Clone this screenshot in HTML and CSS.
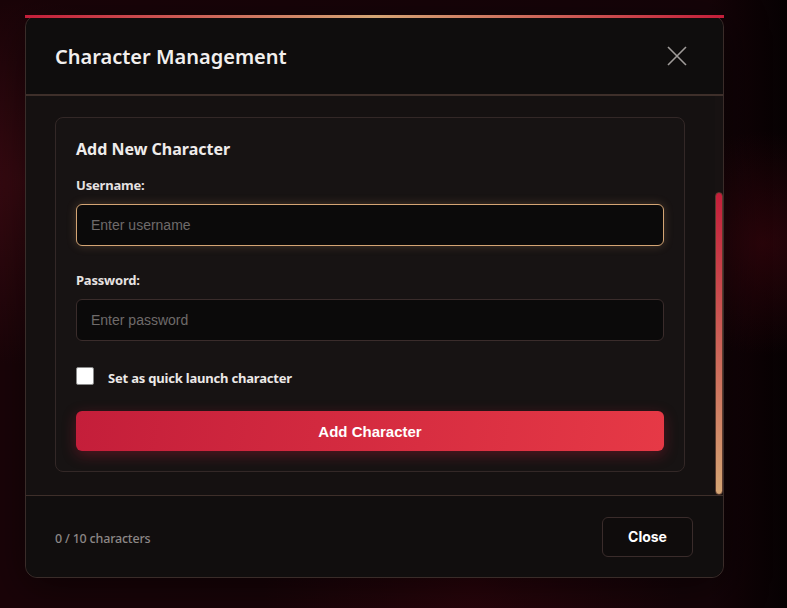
FILE: index.html
```
<!DOCTYPE html>
<html lang="en">
<head>
<meta charset="utf-8">
<title>Character Management</title>
<link rel="stylesheet" href="styles.css">
</head>
<body>
<div class="overlay">
  <div class="modal">
    <div class="modal-header">
      <h2 class="modal-title">Character Management</h2>
      <button class="icon-btn" aria-label="Close">
        <svg width="20" height="20" viewBox="0 0 20 20"><path d="M1 1 L19 19 M19 1 L1 19" stroke="#a09c9a" stroke-width="1.6" fill="none"/></svg>
      </button>
    </div>
    <div class="modal-body">
      <div class="scroll-view">
        <div class="card">
          <h3 class="card-title">Add New Character</h3>
          <div class="form-group">
            <label class="form-label" for="username">Username:</label>
            <input id="username" class="form-input is-focused" type="text" placeholder="Enter username" autofocus>
          </div>
          <div class="form-group">
            <label class="form-label" for="password">Password:</label>
            <input id="password" class="form-input" type="password" placeholder="Enter password">
          </div>
          <label class="check-row">
            <input class="check" type="checkbox">
            <span>Set as quick launch character</span>
          </label>
          <button class="primary-btn">Add Character</button>
        </div>
      </div>
      <div class="scrollbar"><div class="scroll-thumb"></div></div>
    </div>
    <div class="modal-footer">
      <span class="count">0 / 10 characters</span>
      <button class="secondary-btn">Close</button>
    </div>
  </div>
</div>
</body>
</html>
```
FILE: styles.css
```
* { box-sizing: border-box; }
html, body { margin: 0; padding: 0; height: 100%; }
body {
  background:
    radial-gradient(ellipse 300px 260px at 3% 30%, rgba(80, 14, 24, 0.55), transparent 70%),
    radial-gradient(ellipse 200px 160px at 97% 40%, rgba(60, 6, 14, 0.6), transparent 70%),
    radial-gradient(ellipse 300px 300px at 60% 95%, rgba(60, 5, 14, 0.5), transparent 70%),
    linear-gradient(90deg, #1a0408 0%, #150408 90%, #060102 100%);
  font-family: "Noto Sans", sans-serif;
  overflow: hidden;
}
.overlay {
  display: flex;
  padding: 15px 0 0 25px;
}
.modal {
  position: relative;
  width: 699px;
  height: 563px;
  display: flex;
  flex-direction: column;
  background: #120f0f;
  border: 1px solid #3a2c29;
  border-radius: 12px;
  box-shadow: 0 10px 40px rgba(0, 0, 0, 0.5);
}
.modal::before {
  content: "";
  position: absolute;
  top: -1px; left: -1px; right: -1px;
  height: 3px;
  background: linear-gradient(90deg, #c41e3a 0%, #d4a574 50%, #c41e3a 100%);
}
.modal-header {
  height: 80px;
  flex: none;
  display: flex;
  align-items: center;
  justify-content: space-between;
  padding: 2px 29px 0 29px;
  border-bottom: 2px solid #3e2f2a;
  background: #0f0d0d;
  border-radius: 12px 12px 0 0;
}
.modal-title {
  margin: 0;
  font-size: 20px;
  font-weight: 600;
  color: #f2efee;
}
.icon-btn {
  width: 32px; height: 32px;
  display: flex; align-items: center; justify-content: center;
  background: none; border: 0; padding: 0;
  margin-right: 1px;
}
.modal-body {
  flex: 1;
  min-height: 0;
  display: flex;
  background: #151111;
}
.scroll-view {
  flex: 1;
  min-width: 0;
  overflow: hidden;
  padding: 21px 30px 0 29px;
}
.scrollbar {
  width: 8px;
  flex: none;
  display: flex;
  flex-direction: column;
  justify-content: flex-end;
  background: #171212;
}
.scroll-thumb {
  height: 303px;
  border-radius: 4px;
  border: 1px solid #5a3a2e;
  background: linear-gradient(180deg, #c41e3a 0%, #d4a574 100%);
}
.card {
  background: #171313;
  border: 1px solid #332827;
  border-radius: 8px;
  padding: 20px;
}
.card-title {
  margin: 0 0 16px;
  font-size: 16px;
  line-height: 22px;
  font-weight: 700;
  color: #efeceb;
}
.form-group { margin-bottom: 25px; display: flex; flex-direction: column; }
.form-label {
  font-size: 13px;
  line-height: 18px;
  font-weight: 700;
  color: #e6e2e1;
  margin-bottom: 10px;
  letter-spacing: -0.2px;
}
.form-input {
  height: 42px;
  width: 100%;
  background: #0b0a0a;
  border: 1px solid #3a2c2b;
  border-radius: 6px;
  padding: 0 14px;
  font-family: "Liberation Sans", Arial, sans-serif;
  font-size: 14px;
  color: #eee;
  outline: none;
}
.form-input::placeholder { color: #6f6b6a; }
.form-input.is-focused, .form-input:focus {
  border-color: #d4a574;
  box-shadow: 0 0 10px rgba(212, 165, 116, 0.25);
}
.check-row {
  display: flex;
  align-items: center;
  gap: 14px;
  height: 20px;
  margin-bottom: 25px;
  font-size: 13px;
  font-weight: 700;
  color: #ece8e7;
  letter-spacing: -0.2px;
}
.check-row span { padding-top: 4px; }
.check {
  appearance: none;
  -webkit-appearance: none;
  margin: 0;
  width: 18px; height: 18px;
  background: #fff;
  border: 1px solid #8a8a8a;
  border-radius: 2px;
}
.primary-btn {
  display: block;
  width: 100%;
  height: 40px;
  border: 0;
  border-radius: 6px;
  background: linear-gradient(100deg, #c41e3a 0%, #e63946 100%);
  box-shadow: 0 4px 14px rgba(196, 30, 58, 0.35);
  color: #fff;
  font-family: "Liberation Sans", Arial, sans-serif;
  font-size: 15px;
  font-weight: 700;
}
.modal-footer {
  flex: none;
  height: 82px;
  display: flex;
  align-items: center;
  justify-content: space-between;
  padding: 0 30px 0 29px;
  border-top: 1px solid #3e2f2a;
  background: #110e0e;
  border-radius: 0 0 12px 12px;
}
.count {
  font-size: 12.5px;
  font-weight: 500;
  color: #8c8786;
  letter-spacing: -0.2px;
  padding-top: 3px;
}
.secondary-btn {
  width: 91px;
  height: 40px;
  background: #0f0c0c;
  border: 1px solid #3a2c2b;
  border-radius: 6px;
  color: #fff;
  font-family: Inter, "Noto Sans", sans-serif;
  font-size: 14px;
  font-weight: 700;
}
```
